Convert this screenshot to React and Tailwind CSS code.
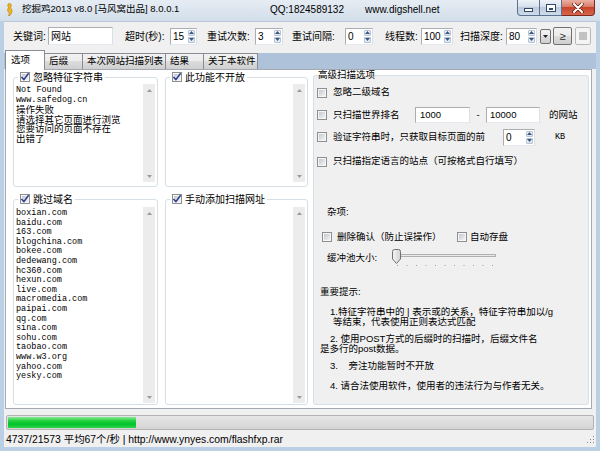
import React from "react";

const SANS = "font-['Liberation_Sans','Noto_Sans_CJK_SC',sans-serif]";
const MONO = "font-['Liberation_Mono','Noto_Sans_CJK_SC',monospace]";

function Check({ checked }) {
  return (
    <span className="inline-block h-[10px] w-[10px] shrink-0 border border-[#8e8f8f] bg-[#f6f6f6] p-px">
      <span className="flex h-full w-full items-center justify-center bg-[linear-gradient(135deg,#c4c8ce,#f3f3f3)]">
        {checked && (
          <svg viewBox="0 0 6 6" className="h-[6px] w-[6px] overflow-visible">
            <path d="M-0.6 3 L1.9 5.6 L6.6 -0.8" fill="none" stroke="#2b3b8e" strokeWidth="1.5" />
          </svg>
        )}
      </span>
    </span>
  );
}

function Arrow({ up, color = "#9a9a9a" }) {
  return (
    <svg viewBox="0 0 5 3" className="h-[3px] w-[5px]">
      <path d={up ? "M0 3 L2.5 0 L5 3Z" : "M0 0 L2.5 3 L5 0Z"} fill={color} />
    </svg>
  );
}

function VScroll() {
  return (
    <div className="flex w-[12px] shrink-0 flex-col bg-[#ececec]">
      <div className="flex h-[12px] items-center justify-center">
        <Arrow up />
      </div>
      <div className="flex-1" />
      <div className="flex h-[12px] items-center justify-center">
        <Arrow />
      </div>
    </div>
  );
}

function SpinBtn({ up }) {
  return (
    <div className="flex flex-1 items-center justify-center rounded-[1px] border border-[#b6c4d6] bg-[linear-gradient(#f4f7fb,#d9e4f1)]">
      <Arrow up={up} color="#3a5680" />
    </div>
  );
}

function Spin({ value, className }) {
  return (
    <div className={`flex h-[17px] shrink-0 border border-[#abadb3] border-b-[#e3e9ef] border-r-[#dbdfe6] bg-white ${className}`}>
      <span className="flex-1 pl-[2px] text-[10px] leading-[15px]">{value}</span>
      <div className="flex w-[9px] flex-col gap-px p-px">
        <SpinBtn up />
        <SpinBtn />
      </div>
    </div>
  );
}

function Lines({ lines }) {
  return lines.map((l, i) =>
    /^[\x00-\x7f]+$/.test(l) ? (
      <div key={i} className={`${MONO} h-[9.6px] whitespace-pre text-[8.5px] leading-[9.6px]`}>
        {l}
      </div>
    ) : (
      <div key={i} className={`${SANS} h-[9.6px] whitespace-pre text-[9.5px] leading-[9.6px]`}>
        {l}
      </div>
    )
  );
}

function Group({ title, checked, lines, w, h, textH, mt }) {
  return (
    <fieldset className={`rounded-[3px] border border-[#d5dfe5] ${w} ${h}`}>
      <legend className="ml-[4px] px-[2px]">
        <span className="flex h-[12px] items-center gap-[3px] text-[10px]">
          <Check checked={checked} />
          <span>{title}</span>
        </span>
      </legend>
      <div className={`mr-[2px] flex ${textH} ${mt}`}>
        <div className="flex-1 overflow-hidden pl-[2px] pt-[2px]">
          <Lines lines={lines} />
        </div>
        <VScroll />
      </div>
    </fieldset>
  );
}

function WinButtons() {
  return (
    <div className="ml-auto mr-[5px] flex h-[16px]">
      <div className="flex w-[23px] items-center justify-center rounded-bl-[4px] border border-t-0 border-[#5b7291] bg-[linear-gradient(#eef3f8,#d6e0ec_45%,#bccbdd_50%,#cfdbe8)]">
        <span className="mt-[5px] h-[4px] w-[9px] border border-[#34496a] bg-white" />
      </div>
      <div className="flex w-[22px] items-center justify-center border border-l-0 border-t-0 border-[#5b7291] bg-[linear-gradient(#eef3f8,#d6e0ec_45%,#bccbdd_50%,#cfdbe8)]">
        <span className="h-[8px] w-[10px] border border-[#34496a] bg-white p-[2px] pt-[3px]">
          <span className="block h-full w-full border border-[#34496a] bg-[#cfdbe8]" />
        </span>
      </div>
      <div className="flex w-[33px] items-center justify-center rounded-br-[4px] border border-l-0 border-t-0 border-[#7b2a20] bg-[linear-gradient(#eab1a3,#d97c66_45%,#c8432c_50%,#d7674c)]">
        <svg viewBox="0 0 12 10" className="h-[10px] w-[12px]">
          <path d="M2 1 L10 9 M10 1 L2 9" stroke="#5a1a12" strokeWidth="3.4" strokeLinecap="round" />
          <path d="M2 1 L10 9 M10 1 L2 9" stroke="#ffffff" strokeWidth="2" strokeLinecap="round" />
        </svg>
      </div>
    </div>
  );
}

function TitleBar() {
  return (
    <div className="flex h-[21px] shrink-0 items-start bg-[linear-gradient(to_bottom,#e6ecf3,#d2deeb)]">
      <div className="flex h-[18px] items-center pl-[6px] text-[10px]">
        <svg viewBox="0 0 7 13" className="h-[13px] w-[7px]">
          <path d="M3 0.5 C5 0.5 6 2 5 3.5 L4.5 5 C6 6 6.5 8 5.5 10 L4 12.5 L2.5 12.5 L3.5 10 C2 9 1 7.5 2 5.5 L2.5 4.5 C1.5 3.5 1.5 0.5 3 0.5Z" fill="#f0b41c" stroke="#b9780a" strokeWidth="0.6" />
        </svg>
        <span className="ml-[9px] w-[248px] whitespace-nowrap text-[9.5px]">挖掘鸡2013 v8.0 [马风窝出品] 8.0.0.1</span>
        <span className="w-[95px] whitespace-nowrap">QQ:1824589132</span>
        <span className="w-[150px] whitespace-nowrap">www.digshell.net</span>
      </div>
      <WinButtons />
    </div>
  );
}

function Btn({ className, children }) {
  return (
    <div className={`flex shrink-0 items-center justify-center rounded-[2px] border border-[#707070] bg-[linear-gradient(#f2f2f2,#ebebeb_50%,#dddddd_50%,#cfcfcf)] ${className}`}>
      {children}
    </div>
  );
}

function Toolbar() {
  return (
    <div className="flex h-[29px] shrink-0 items-center whitespace-nowrap border-t border-[#b9c9da] text-[10px]">
      <span className="ml-[9px] w-[35px]">关键词:</span>
      <div className="flex h-[18px] w-[65px] shrink-0 items-center border border-[#abadb3] border-b-[#e3e9ef] border-r-[#dbdfe6] bg-white pl-[2px]">网站</div>
      <span className="ml-[12px] w-[45px]">超时(秒):</span>
      <Spin value="15" className="w-[27px]" />
      <span className="ml-[10px] w-[48px]">重试次数:</span>
      <Spin value="3" className="w-[28px]" />
      <span className="ml-[9px] w-[53px]">重试间隔:</span>
      <Spin value="0" className="w-[28px]" />
      <span className="ml-[12px] w-[36px]">线程数:</span>
      <Spin value="100" className="w-[32px]" />
      <span className="ml-[7px] w-[46px]">扫描深度:</span>
      <Spin value="80" className="w-[31px]" />
      <Btn className="ml-[3px] h-[15px] w-[11px]">
        <Arrow color="#222" />
      </Btn>
      <Btn className="ml-[2px] h-[18px] w-[19px]">
        <span className="text-[11px] leading-none text-[#222]">≥</span>
      </Btn>
      <div className="ml-[3px] flex h-[18px] w-[16px] shrink-0 items-center justify-center rounded-[2px] border border-[#b5b9bc] bg-[#f4f4f4]">
        <span className="h-[8px] w-[8px] bg-[#c2c2c2]" />
      </div>
    </div>
  );
}

function Tab({ sel, w, children }) {
  if (sel)
    return (
      <div className={`relative z-10 -mb-px flex h-[20px] ${w} shrink-0 items-start border border-b-0 border-[#898c95] bg-white pl-[5px] pt-[2px] text-[9.5px] leading-[13px]`}>
        {children}
      </div>
    );
  return (
    <div className={`-ml-px flex h-[16px] ${w} shrink-0 items-center border border-b-0 border-[#898c95] bg-[linear-gradient(#f2f2f2,#ebebeb_50%,#dddddd_50%,#cfcfcf)] pl-[4px] text-[9.5px]`}>
      {children}
    </div>
  );
}

function Tabs() {
  return (
    <div className="flex h-[19px] shrink-0 items-end whitespace-nowrap bg-[linear-gradient(to_bottom,#f0f0f0_3px,#aec2d9_3px)] pl-[1px]">
      <Tab sel w="w-[40px]">选项</Tab>
      <Tab w="w-[39px]">后缀</Tab>
      <Tab w="w-[84px]">本次网站扫描列表</Tab>
      <Tab w="w-[39px]">结果</Tab>
      <Tab w="w-[55px]">关于本软件</Tab>
    </div>
  );
}

function Row({ className, children }) {
  return <div className={`flex items-center whitespace-nowrap ${className}`}>{children}</div>;
}

function Slider() {
  const ticks = [];
  for (let i = 0; i < 11; i++) ticks.push(<rect key={i} x={5 + i * 9.5} y="16" width="1" height="1" fill="#9c9c9c" />);
  return (
    <svg viewBox="0 0 106 18" className="h-[18px] w-[106px]">
      <rect x="4.5" y="5.5" width="99" height="2" fill="#e7eaea" stroke="#b0b0b0" strokeWidth="1" />
      <defs>
        <linearGradient id="th" x1="0" y1="0" x2="1" y2="0">
          <stop offset="0" stopColor="#f4f4f4" />
          <stop offset="1" stopColor="#d3d3d3" />
        </linearGradient>
      </defs>
      <path d="M0.5 2.5 Q0.5 0.5 2.5 0.5 H6.5 Q8.5 0.5 8.5 2.5 V10 L4.5 14.5 L0.5 10 Z" fill="url(#th)" stroke="#707070" strokeWidth="1" />
      {ticks}
    </svg>
  );
}

function RightPanel() {
  return (
    <fieldset className="-mt-px ml-[5px] h-[335px] w-[276px] rounded-[3px] border border-[#d5dfe5] bg-[#f0f0f0] pl-[3px] text-[9.5px]">
      <legend className="ml-px h-[10px] text-[9.5px] leading-[10px]">高级扫描选项</legend>
      <Row className="mt-[6px] h-[13px]">
        <Check />
        <span className="ml-[6px]">忽略二级域名</span>
      </Row>
      <Row className="mt-[7px] h-[18px]">
        <Check />
        <span className="ml-[6px] w-[82px]">只扫描世界排名</span>
        <div className="flex h-[16px] w-[55px] items-center border border-[#abadb3] border-b-[#e3e9ef] border-r-[#dbdfe6] bg-white pl-[4px]">1000</div>
        <span className="w-[16px] text-center">-</span>
        <div className="flex h-[16px] w-[54px] items-center border border-[#abadb3] border-b-[#e3e9ef] border-r-[#dbdfe6] bg-white pl-[3px]">10000</div>
        <span className="ml-[9px]">的网站</span>
      </Row>
      <Row className="mt-[4px] h-[18px]">
        <Check />
        <span className="ml-[6px] w-[170px]">验证字符串时，只获取目标页面的前</span>
        <Spin value="0" className="w-[32px]" />
        <span className={`${MONO} ml-[20px] text-[8.5px]`}>KB</span>
      </Row>
      <Row className="mt-[9px] h-[13px]">
        <Check />
        <span className="ml-[6px]">只扫描指定语言的站点（可按格式自行填写）</span>
      </Row>
      <Row className="mt-[38px] h-[12px]">
        <span className="ml-[10px]">杂项:</span>
      </Row>
      <Row className="mt-[13px] h-[12px]">
        <span className="ml-[5px]" />
        <Check />
        <span className="ml-[5px] w-[120px]">删除确认（防止误操作）</span>
        <Check />
        <span className="ml-[3px]">自动存盘</span>
      </Row>
      <Row className="mt-[6px] h-[18px]">
        <span className="ml-[10px] w-[65px]">缓冲池大小:</span>
        <Slider />
      </Row>
      <Row className="mt-[19px] h-[12px]">
        <span className="ml-[3px]">重要提示:</span>
      </Row>
      <div className="mt-[9px] leading-[9.6px]">
        <div className="ml-[13px] h-[9.6px] whitespace-pre">1.特征字符串中的 | 表示或的关系，特征字符串加以/g</div>
        <div className="ml-[16px] h-[9.6px] whitespace-pre">等结束，代表使用正则表达式匹配</div>
        <div className="ml-[13px] mt-[8px] h-[9.6px] whitespace-pre">2. 使用POST方式的后缀时的扫描时，后缀文件名</div>
        <div className="ml-[3px] h-[9.6px] whitespace-pre">是多行的post数据。</div>
        <div className="ml-[13px] mt-[8px] h-[9.6px] whitespace-pre">3.    旁注功能暂时不开放</div>
        <div className="ml-[13px] mt-[10px] h-[9.6px] whitespace-pre">4. 请合法使用软件，使用者的违法行为与作者无关。</div>
      </div>
    </fieldset>
  );
}

function TabPage() {
  const ignore = ["Not Found", "www.safedog.cn", "操作失败", "请选择其它页面进行浏览", "您要访问的页面不存在", "出错了"];
  const skip = [
    "boxian.com", "baidu.com", "163.com", "blogchina.com", "bokee.com", "dedewang.com", "hc360.com", "hexun.com", "live.com",
    "macromedia.com", "paipai.com", "qq.com", "sina.com", "sohu.com", "taobao.com", "www.w3.org", "yahoo.com", "yesky.com",
  ];
  return (
    <div className="ml-[1px] flex h-[340px] w-[587px] shrink-0 border border-[#a3aab4] bg-white pl-[7px] pt-px">
      <div className="flex flex-col gap-[6px]">
        <div className="flex gap-[7px]">
          <Group title="忽略特征字符串" checked lines={ignore} w="w-[145px]" h="h-[116px]" textH="h-[98px]" mt="mt-px" />
          <Group title="此功能不开放" checked lines={[]} w="w-[143px]" h="h-[116px]" textH="h-[98px]" mt="mt-px" />
        </div>
        <div className="flex gap-[7px]">
          <Group title="跳过域名" checked lines={skip} w="w-[145px]" h="h-[212px]" textH="h-[196px]" mt="mt-[2px]" />
          <Group title="手动添加扫描网址" checked lines={[]} w="w-[143px]" h="h-[212px]" textH="h-[196px]" mt="mt-[2px]" />
        </div>
      </div>
      <RightPanel />
    </div>
  );
}

export default function App() {
  return (
    <div className={`flex h-[451px] w-[600px] flex-col overflow-hidden bg-[#bcd0e5] text-black ${SANS}`}>
      <TitleBar />
      <div className="mx-[4px] flex h-[426px] shrink-0 flex-col bg-[#f0f0f0]">
        <Toolbar />
        <Tabs />
        <TabPage />
        <div className="h-[6px] shrink-0" />
        <div className="ml-[2px] h-[15px] w-[588px] shrink-0 rounded-[2px] border border-[#b2b2b2] bg-[linear-gradient(#e6e6e6,#d4d4d4)] p-px">
          <div className="h-full w-[128px] bg-[linear-gradient(#8be896,#22d03d_35%,#00c22a_65%,#2fd34b)]" />
        </div>
        <div className="flex h-[17px] shrink-0 items-center justify-between pl-[2px] pt-[3px] text-[10.4px]">
          <span className="whitespace-nowrap">4737/21573 平均67个/秒 | http://www.ynyes.com/flashfxp.rar</span>
          <svg viewBox="0 0 8 8" className="mr-px h-[8px] w-[8px]">
            <rect x="6" y="6" width="1" height="1" fill="#8a8a8a" />
            <rect x="3" y="6" width="1" height="1" fill="#8a8a8a" />
            <rect x="6" y="3" width="1" height="1" fill="#8a8a8a" />
            <rect x="0" y="6" width="1" height="1" fill="#8a8a8a" />
            <rect x="3" y="3" width="1" height="1" fill="#8a8a8a" />
            <rect x="6" y="0" width="1" height="1" fill="#8a8a8a" />
          </svg>
        </div>
      </div>
    </div>
  );
}
